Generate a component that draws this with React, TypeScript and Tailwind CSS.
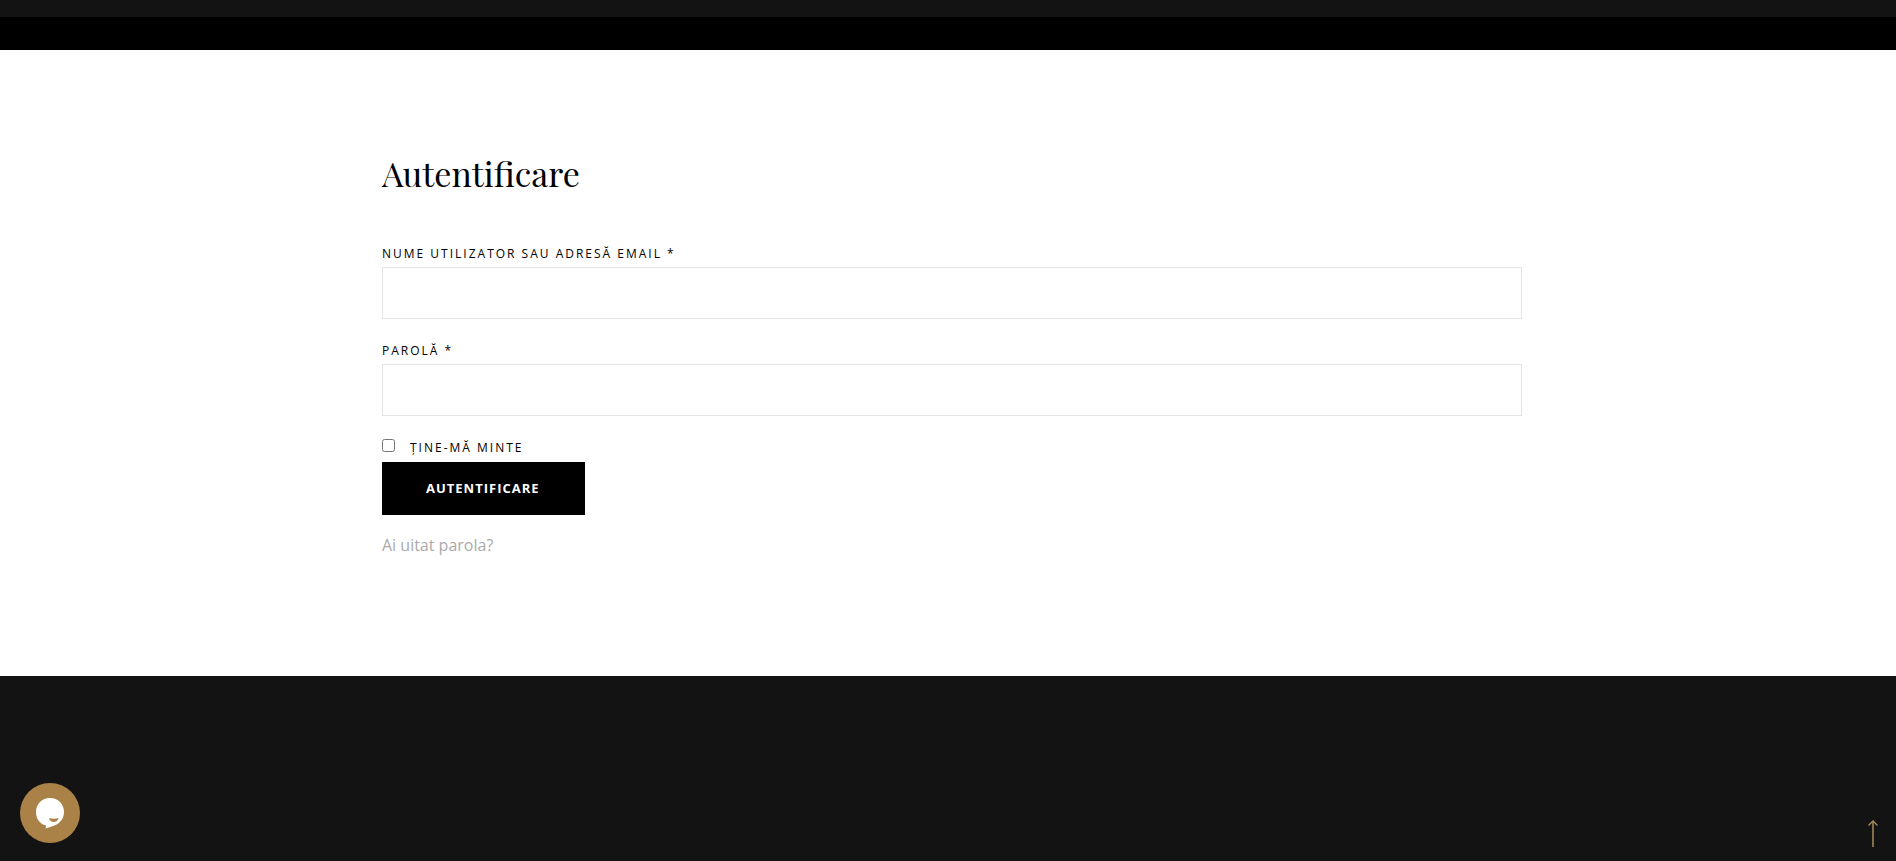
import { useState } from 'react';

// Site palette
const colors = {
  dark: '#131313',
  gold: '#aa8147',
};

const labelClass = 'text-xs leading-6 font-medium uppercase tracking-[2px] text-black';

interface TextFieldProps {
  id: string;
  label: string;
  type: 'text' | 'password';
}

function TextField({ id, label, type }: TextFieldProps) {
  return (
    <div className="mb-5 flex flex-col">
      <label htmlFor={id} className={labelClass}>
        {label} *
      </label>
      <input
        id={id}
        name={id}
        type={type}
        required
        className="mt-px h-[52px] w-full border border-[#e4e4e4] bg-white px-5 outline-none focus:border-black"
      />
    </div>
  );
}

function LoginForm() {
  const [remember, setRemember] = useState(false);

  return (
    <form onSubmit={(e) => e.preventDefault()}>
      <TextField id="username" label="Nume utilizator sau adresă email" type="text" />
      <TextField id="password" label="Parolă" type="password" />
      <div className="flex flex-col items-start">
        <label htmlFor="remember" className={`flex ${labelClass}`}>
          <input
            id="remember"
            type="checkbox"
            checked={remember}
            onChange={(e) => setRemember(e.target.checked)}
            className="mt-[3px] mr-[15px] size-[13px]"
          />
          Ține-mă minte
        </label>
        <button
          type="submit"
          className="mt-0.5 h-[53px] bg-black pr-[45px] pl-11 text-[13px] font-bold uppercase tracking-[1px] text-white"
        >
          Autentificare
        </button>
      </div>
      <a href="#" className="mt-4 inline-block text-base leading-7 text-[#aaa]">
        Ai uitat parola?
      </a>
    </form>
  );
}

function ChatButton() {
  return (
    <button
      type="button"
      aria-label="Chat"
      className="fixed bottom-[18px] left-5 flex size-[60px] items-center justify-center rounded-full"
      style={{ backgroundColor: colors.gold }}
    >
      <svg width="60" height="60" viewBox="0 0 60 60">
        <path
          d="M30 15c8 0 14 6 14 14 0 7-4.500 11.500-9 13.200-3 1.200-6.300 2.200-9.500 3.300.5-1.200.6-2.200.2-3.200C20 41 16 36 16 29c0-8 6-14 14-14z"
          fill="#fff"
        />
        <path d="M29 35c3 1 6.500 1 9.500 0-.6 2.600-2.400 4-4.700 4-2.300 0-4.200-1.500-4.800-4z" fill={colors.gold} />
      </svg>
    </button>
  );
}

function ScrollTopLink() {
  return (
    <a href="#" aria-label="Sus" className="fixed right-[18px] bottom-[14px]">
      <svg width="10" height="27" viewBox="0 0 10 27" fill="none" stroke="#a88d5d">
        <path d="M5 1v26" strokeWidth="1.500" />
        <path d="M.5 5.500 5 1l4.500 4.500" strokeWidth="1.300" />
      </svg>
    </a>
  );
}

export default function App() {
  return (
    <div className="flex min-h-screen flex-col bg-white font-['Open_Sans',sans-serif]">
      <header>
        <div className="h-[17px]" style={{ backgroundColor: colors.dark }} />
        <div className="h-[33px] bg-black" />
      </header>
      <main className="pt-[98px] pb-[117px] pl-2">
        <div className="mx-auto max-w-[1140px]">
          <h1 className="mb-11 font-['Playfair_Display','Liberation_Serif',serif] text-[34px] leading-[50px] text-black">
            Autentificare
          </h1>
          <LoginForm />
        </div>
      </main>
      <footer className="grow" style={{ backgroundColor: colors.dark }} />
      <ChatButton />
      <ScrollTopLink />
    </div>
  );
}
